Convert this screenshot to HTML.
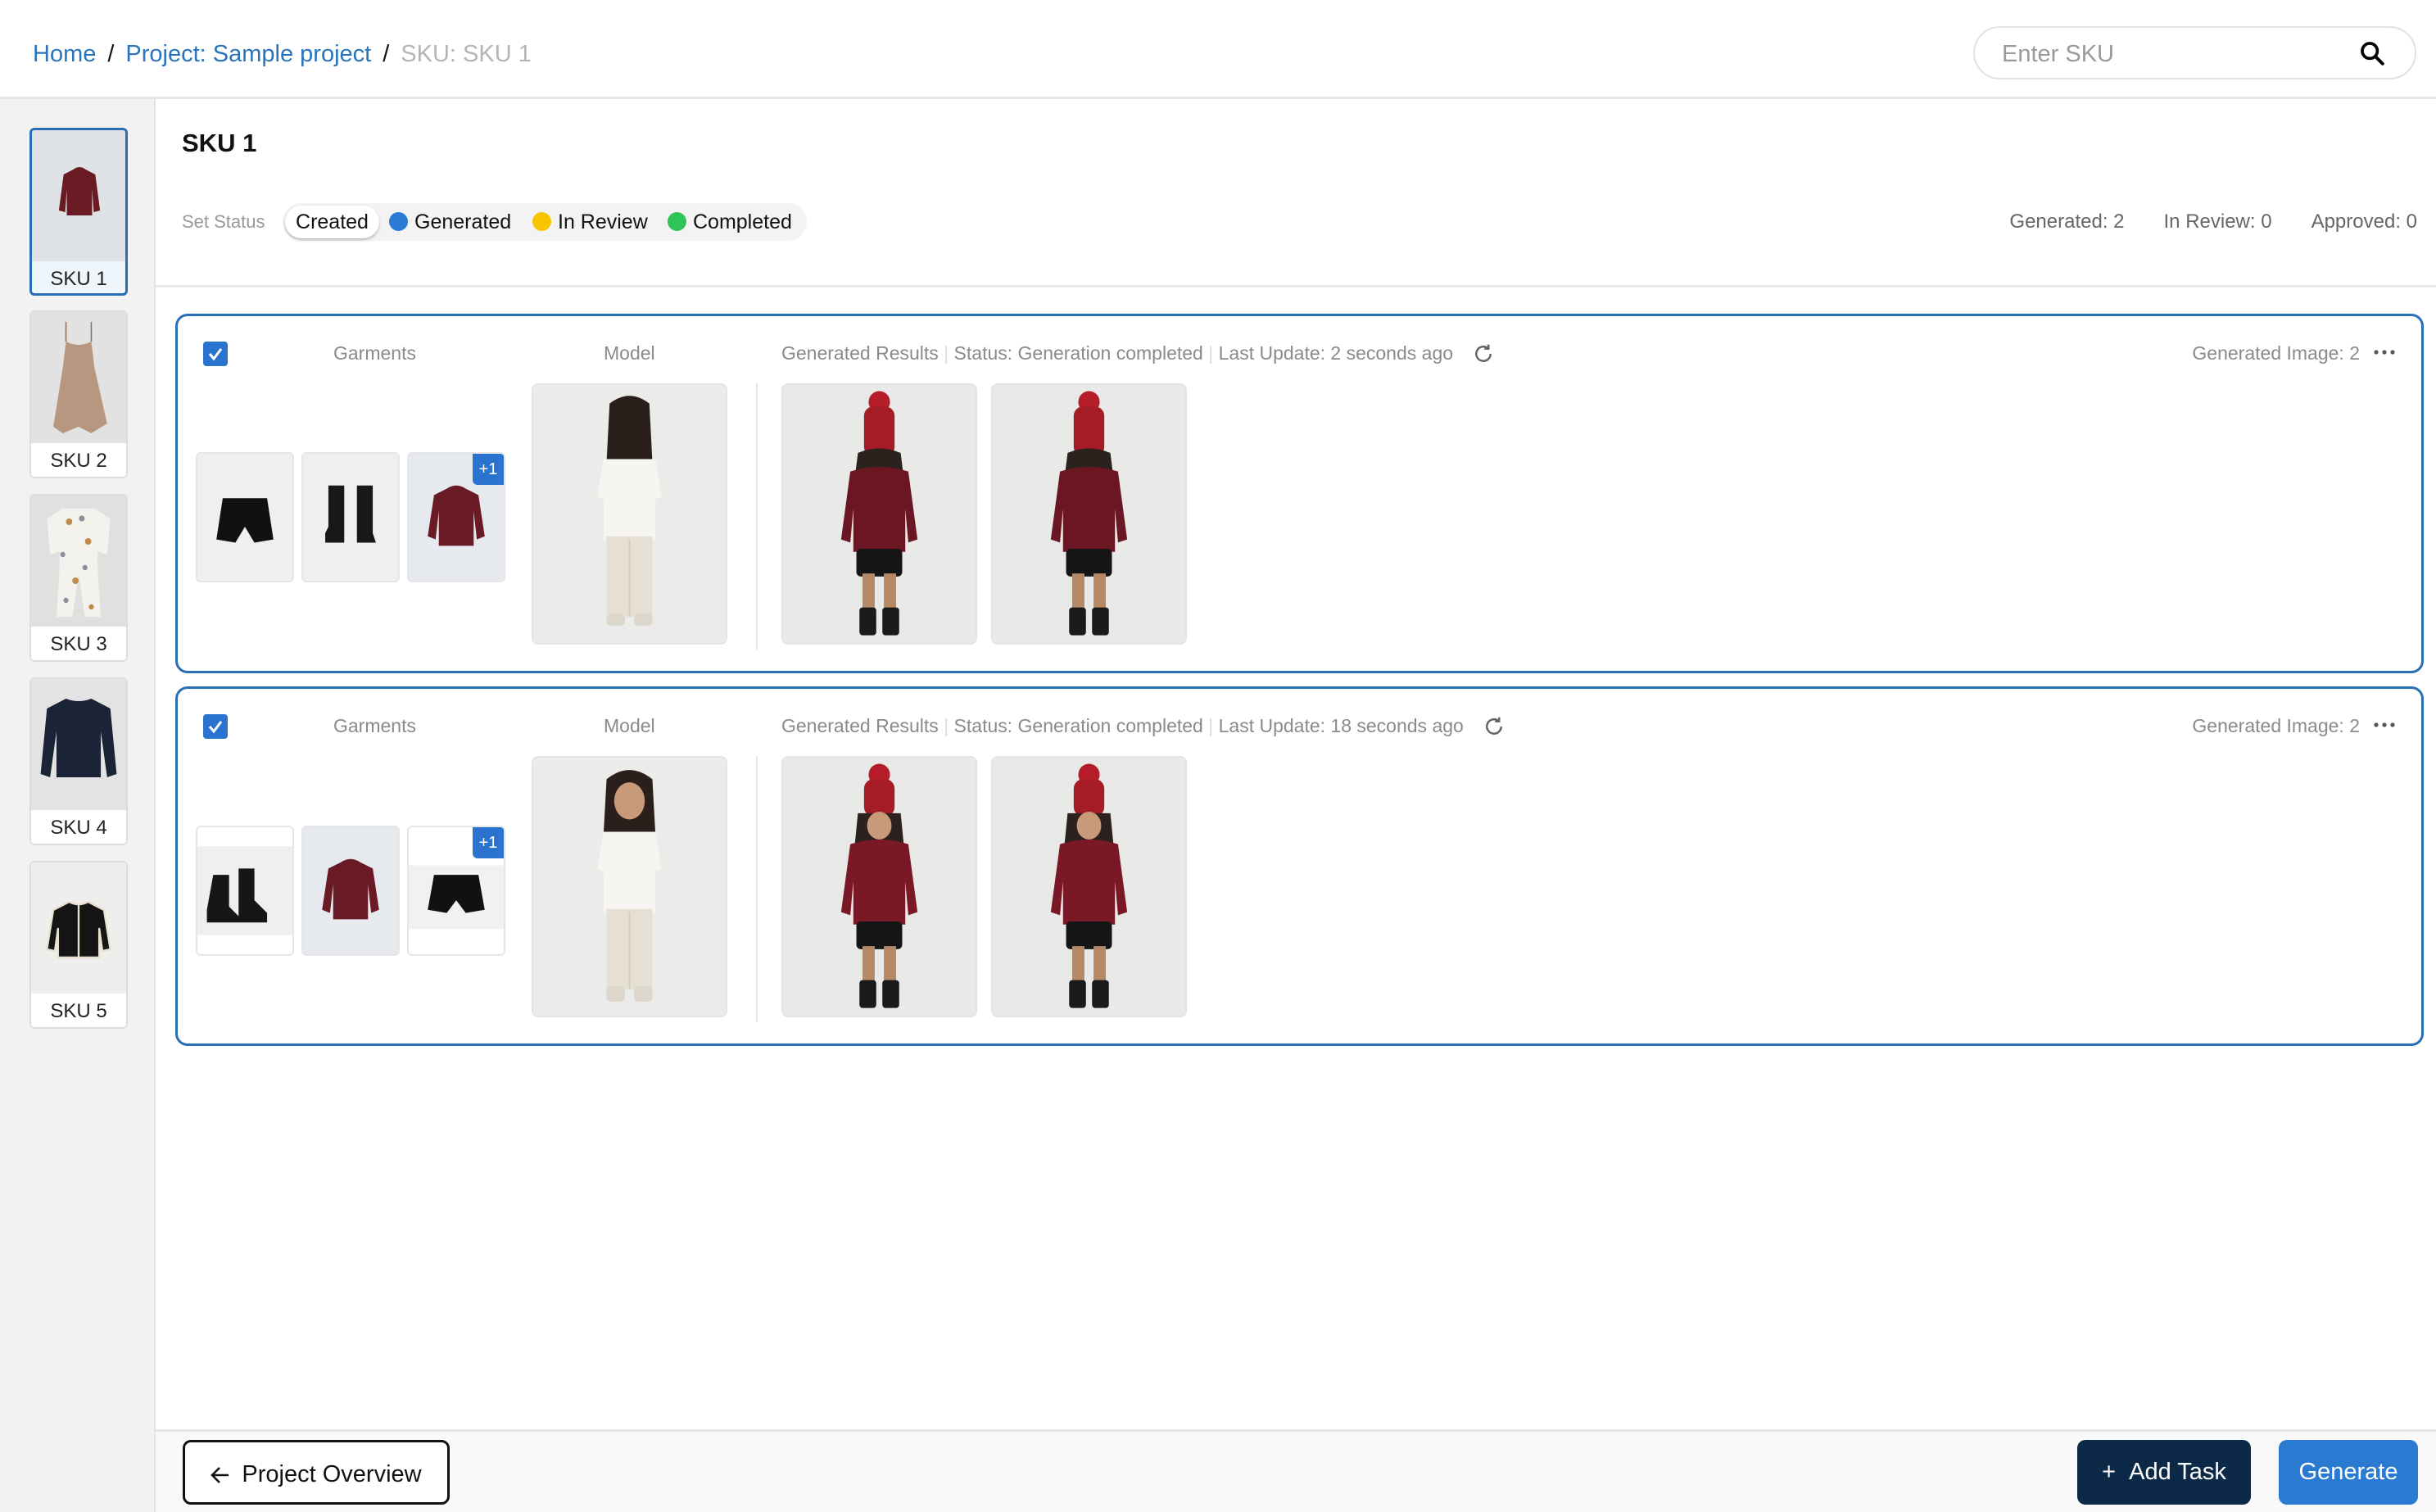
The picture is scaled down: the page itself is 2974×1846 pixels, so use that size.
<!DOCTYPE html>
<html><head><meta charset="utf-8"><style>
*{box-sizing:border-box;margin:0;padding:0}
body{width:2974px;height:1846px;background:#fff;font-family:"Liberation Sans",sans-serif;position:relative;overflow:hidden;color:#111}
.a{position:absolute}
.hdr{left:0;top:0;width:2974px;height:121px;border-bottom:3px solid #e6e6e6;background:#fff}
.bc{left:40px;top:50px;font-size:29px;white-space:nowrap}
.bc .l{color:#2a74bd}.bc .s{color:#111;margin:0 14px}.bc .g{color:#b5b5b5}
.search{left:2409px;top:32px;width:541px;height:65px;border:2px solid #e2e2e2;border-radius:33px}
.search span{position:absolute;left:33px;top:16px;font-size:29px;color:#9a9a9a}
.side{left:0;top:121px;width:190px;height:1725px;background:#f2f2f2;border-right:2px solid #e4e4e4}
.sk{left:36px;width:120px;height:205px;border:2px solid #ddd;border-radius:6px;background:#fff;overflow:hidden}
.sk svg{display:block;width:116px;height:160px}
.sk div{text-align:center;font-size:24px;color:#222;margin-top:8px}
.sk.on{border:3px solid #2a6fb5;background:#eef5fb}
.title{left:222px;top:157px;font-size:31px;font-weight:bold}
.ss{left:222px;top:258px;font-size:22px;color:#999}
.pill{left:345px;top:248px;width:640px;height:46px;background:#f3f3f3;border-radius:23px}
.pill .c{position:absolute;left:3px;top:3px;width:115px;height:40px;background:#fff;border-radius:20px;box-shadow:0 2px 3px rgba(0,0,0,.25);font-size:25px;text-align:center;line-height:40px}
.pill .it{position:absolute;top:9px;font-size:25px;line-height:28px}
.dot{display:inline-block;width:23px;height:23px;border-radius:50%;vertical-align:-3px;margin-right:8px}
.cnt{right:23px;top:257px;font-size:24px;color:#666;white-space:nowrap}
.cnt span{margin-left:48px}
.div{left:190px;top:348px;width:2784px;height:3px;background:#e8e8e8}
.card{left:214px;width:2745px;height:439px;border:3px solid #2a6fb5;border-radius:15px;background:#fff}
.cb{left:31px;top:31px;width:30px;height:30px;background:#2a74d0;border-radius:4px}
.lab{font-size:23px;color:#8a8a8a;white-space:nowrap;top:32px}
.th{width:120px;height:159px;border:2px solid #e6e6e6;border-radius:6px;overflow:hidden;background:#eee}
.th svg,.big svg{display:block;width:100%;height:100%}
.big{width:239px;height:319px;border:2px solid #e4e4e4;border-radius:8px;overflow:hidden}
.plus{right:0;top:0;width:38px;height:38px;background:#2a74d0;color:#fff;font-size:20px;text-align:center;line-height:38px;border-radius:0 0 0 6px}
.vl{width:2px;background:#e6e6e6}
.bot{left:190px;top:1745px;width:2784px;height:101px;background:#f9f9f9;border-top:3px solid #e6e6e6}
.btn{height:79px;border-radius:10px;font-size:29px;line-height:79px;text-align:center}
.dots{top:40px;width:30px;height:8px}
</style></head><body>
<div class="a hdr"></div>
<div class="a bc"><span class="l">Home</span><span class="s">/</span><span class="l">Project: Sample project</span><span class="s">/</span><span class="g">SKU: SKU 1</span></div>
<div class="a search"><span>Enter SKU</span>
<svg class="a" style="left:468px;top:14px" width="34" height="34" viewBox="0 0 24 24"><circle cx="10" cy="10" r="6.5" fill="none" stroke="#000" stroke-width="2.6"/><path d="M15 15l6 6" stroke="#000" stroke-width="2.8" stroke-linecap="round"/></svg></div>

<div class="a side"></div>
<div class="a sk on" style="top:156px"><svg viewBox="0 0 60 80" preserveAspectRatio="none"><rect width="60" height="80" fill="#dfe3e6"/><path d="M26 24q4-3 8 0l6 3 3 22-4 1-1-14v16H22V36l-1 14-4-1 3-22z" fill="#6a1a22"/></svg><div>SKU 1</div></div>
<div class="a sk" style="top:379px"><svg viewBox="0 0 60 80" preserveAspectRatio="none"><rect width="60" height="80" fill="#e2e2e2"/><path d="M22 6v12M38 6v12" stroke="#8a7060" stroke-width=".8"/><path d="M22 18q8 4 16 0l2 16 8 34-10 6-8-4-10 4-6-4 6-36z" fill="#b89781"/></svg><div>SKU 2</div></div>
<div class="a sk" style="top:603px"><svg viewBox="0 0 60 80" preserveAspectRatio="none"><rect width="60" height="80" fill="#e0e0e0"/><path d="M20 8h20l10 6-2 22-6-2v10l2 30h-10l-4-26-4 26H16l2-30V34l-6 2-2-22z" fill="#f4f2ec"/><g fill="#c08a4a"><circle cx="24" cy="16" r="2"/><circle cx="36" cy="28" r="2"/><circle cx="28" cy="52" r="2"/><circle cx="38" cy="68" r="1.6"/></g><g fill="#8a9098"><circle cx="32" cy="14" r="1.8"/><circle cx="20" cy="36" r="1.6"/><circle cx="34" cy="44" r="1.6"/><circle cx="22" cy="64" r="1.6"/></g></svg><div>SKU 3</div></div>
<div class="a sk" style="top:827px"><svg viewBox="0 0 60 80" preserveAspectRatio="none"><rect width="60" height="80" fill="#e3e3e3"/><path d="M22 12q8 3 16 0l12 6 4 40-6 2-4-28v28H16V32l-4 28-6-2 4-40z" fill="#1b2337"/></svg><div>SKU 4</div></div>
<div class="a sk" style="top:1051px"><svg viewBox="0 0 60 80" preserveAspectRatio="none"><rect width="60" height="80" fill="#eeeeec"/><path d="M24 24q6 3 12 0l10 5 4 24-5 1-2-14v18H17V40l-2 14-5-1 4-24z" fill="#151515" stroke="#e8e0cc" stroke-width="1.2"/><path d="M30 26v32" stroke="#e8e0cc" stroke-width="1.2"/></svg><div>SKU 5</div></div>

<div class="a title">SKU 1</div>
<div class="a ss">Set Status</div>
<div class="a pill"><div class="c">Created</div>
<div class="it" style="left:130px"><span class="dot" style="background:#2a7ad6"></span>Generated</div>
<div class="it" style="left:305px"><span class="dot" style="background:#f7c400"></span>In Review</div>
<div class="it" style="left:470px"><span class="dot" style="background:#2fc45a"></span>Completed</div></div>
<div class="a cnt">Generated: 2<span>In Review: 0</span><span>Approved: 0</span></div>
<div class="a div"></div>

<!-- CARD 1 -->
<div class="a card" style="top:383px">
<div class="a cb"><svg width="30" height="30" viewBox="0 0 30 30"><path d="M8 15l5 6 9-12" fill="none" stroke="#fff" stroke-width="3"/></svg></div>
<div class="a lab" style="left:190px">Garments</div>
<div class="a lab" style="left:520px">Model</div>
<div class="a lab" style="left:737px">Generated Results <span style="color:#ddd">|</span> Status: Generation completed <span style="color:#ddd">|</span> Last Update: 2 seconds ago</div>
<svg class="a" style="left:1579px;top:31px" width="30" height="30" viewBox="0 0 24 24"><path d="M19 12a7 7 0 1 1-2.5-5.4" fill="none" stroke="#666" stroke-width="2"/><path d="M17 3v4h-4" fill="none" stroke="#666" stroke-width="2"/></svg>
<div class="a lab" style="right:75px">Generated Image: 2</div>
<svg class="a dots" style="right:30px" viewBox="0 0 30 8"><circle cx="5" cy="4" r="2.6" fill="#555"/><circle cx="15" cy="4" r="2.6" fill="#555"/><circle cx="25" cy="4" r="2.6" fill="#555"/></svg>
<div class="a th" style="left:22px;top:166px"><svg viewBox="0 0 60 80" preserveAspectRatio="none"><rect width="60" height="80" fill="#efefef"/><path d="M16 28h28l4 26-12 2-6-10-6 10-12-2z" fill="#111"/></svg></div>
<div class="a th" style="left:151px;top:166px"><svg viewBox="0 0 60 80" preserveAspectRatio="none"><rect width="60" height="80" fill="#efefef"/><path d="M16 20h10v36h-12v-6l2-4z M34 20h10v30l2 6H34z" fill="#181818"/></svg></div>
<div class="a th" style="left:280px;top:166px"><svg viewBox="0 0 60 80" preserveAspectRatio="none"><rect width="60" height="80" fill="#e6eaee"/><path d="M24 22q6-4 12 0l8 4 4 26-5 2-2-18v22H19V36l-2 18-5-2 4-26z" fill="#6a1a24"/></svg><div class="a plus">+1</div></div>
<div class="a big" style="left:432px;top:82px"><svg viewBox="0 0 126 167" preserveAspectRatio="none"><rect width="126" height="167" fill="#ebebe9"/><path d="M50 12q13-10 26 0l2 38H48z" fill="#2a1f1a"/><path d="M46 48h34l4 24-4 2v26H46V74l-4-2z" fill="#f6f5f1"/><rect x="48" y="98" width="30" height="52" fill="#e6e0d4"/><path d="M63 100v50" stroke="#d4cec2"/><rect x="48" y="148" width="12" height="8" rx="3" fill="#dcd6cc"/><rect x="66" y="148" width="12" height="8" rx="3" fill="#dcd6cc"/></svg></div>
<div class="a vl" style="left:706px;top:82px;height:325px"></div>
<div class="a big" style="left:737px;top:82px"><svg viewBox="0 0 126 167" preserveAspectRatio="none"><rect width="126" height="167" fill="#e9e9e7"/><circle cx="63" cy="11" r="7" fill="#b51d2a"/><rect x="53" y="14" width="20" height="32" rx="6" fill="#a51b26"/><path d="M49 44q14-6 28 0l2 16H47z" fill="#2b211d"/><path d="M44 56q19-6 38 0l6 44-6 2-2-22v28H46V80l-2 22-6-2z" fill="#6b1723"/><rect x="48" y="106" width="30" height="18" rx="3" fill="#151515"/><rect x="52" y="122" width="8" height="25" fill="#b58866"/><rect x="66" y="122" width="8" height="25" fill="#b58866"/><rect x="50" y="144" width="11" height="18" rx="2" fill="#1a1a1a"/><rect x="65" y="144" width="11" height="18" rx="2" fill="#1a1a1a"/></svg></div>
<div class="a big" style="left:993px;top:82px"><svg viewBox="0 0 126 167" preserveAspectRatio="none"><rect width="126" height="167" fill="#e9e9e7"/><circle cx="63" cy="11" r="7" fill="#b51d2a"/><rect x="53" y="14" width="20" height="32" rx="6" fill="#a51b26"/><path d="M49 44q14-6 28 0l2 16H47z" fill="#2b211d"/><path d="M44 56q19-6 38 0l6 44-6 2-2-22v28H46V80l-2 22-6-2z" fill="#6b1723"/><rect x="48" y="106" width="30" height="18" rx="3" fill="#151515"/><rect x="52" y="122" width="8" height="25" fill="#b58866"/><rect x="66" y="122" width="8" height="25" fill="#b58866"/><rect x="50" y="144" width="11" height="18" rx="2" fill="#1a1a1a"/><rect x="65" y="144" width="11" height="18" rx="2" fill="#1a1a1a"/></svg></div>
</div>

<!-- CARD 2 -->
<div class="a card" style="top:838px">
<div class="a cb"><svg width="30" height="30" viewBox="0 0 30 30"><path d="M8 15l5 6 9-12" fill="none" stroke="#fff" stroke-width="3"/></svg></div>
<div class="a lab" style="left:190px">Garments</div>
<div class="a lab" style="left:520px">Model</div>
<div class="a lab" style="left:737px">Generated Results <span style="color:#ddd">|</span> Status: Generation completed <span style="color:#ddd">|</span> Last Update: 18 seconds ago</div>
<svg class="a" style="left:1592px;top:31px" width="30" height="30" viewBox="0 0 24 24"><path d="M19 12a7 7 0 1 1-2.5-5.4" fill="none" stroke="#666" stroke-width="2"/><path d="M17 3v4h-4" fill="none" stroke="#666" stroke-width="2"/></svg>
<div class="a lab" style="right:75px">Generated Image: 2</div>
<svg class="a dots" style="right:30px" viewBox="0 0 30 8"><circle cx="5" cy="4" r="2.6" fill="#555"/><circle cx="15" cy="4" r="2.6" fill="#555"/><circle cx="25" cy="4" r="2.6" fill="#555"/></svg>
<div class="a th" style="left:22px;top:167px;background:#fff"><svg viewBox="0 0 60 80" preserveAspectRatio="none"><rect width="60" height="80" fill="#fff"/><rect y="12" width="60" height="56" fill="#efefef"/><path d="M10 30h10v20l6 6v4H6v-8z M26 26h10v20l8 8v6H26z" fill="#161616"/></svg></div>
<div class="a th" style="left:151px;top:167px"><svg viewBox="0 0 60 80" preserveAspectRatio="none"><rect width="60" height="80" fill="#e6eaee"/><path d="M24 22q6-4 12 0l8 4 4 26-5 2-2-18v22H19V36l-2 18-5-2 4-26z" fill="#6a1a24"/></svg></div>
<div class="a th" style="left:280px;top:167px;background:#fff"><svg viewBox="0 0 60 80" preserveAspectRatio="none"><rect width="60" height="80" fill="#fff"/><rect y="24" width="60" height="40" fill="#f1f1f1"/><path d="M16 30h28l4 22-12 2-6-8-6 8-12-2z" fill="#111"/></svg><div class="a plus">+1</div></div>
<div class="a big" style="left:432px;top:82px"><svg viewBox="0 0 126 167" preserveAspectRatio="none"><rect width="126" height="167" fill="#ebebe9"/><path d="M48 14q15-12 30 0l2 36H46z" fill="#2a1f1a"/><ellipse cx="63" cy="28" rx="10" ry="12" fill="#c99a7a"/><path d="M46 48h34l4 24-4 2v26H46V74l-4-2z" fill="#f6f5f1"/><rect x="48" y="98" width="30" height="52" fill="#e6e0d4"/><path d="M63 100v50" stroke="#d4cec2"/><rect x="48" y="148" width="12" height="10" rx="3" fill="#dcd6cc"/><rect x="66" y="148" width="12" height="10" rx="3" fill="#dcd6cc"/></svg></div>
<div class="a vl" style="left:706px;top:82px;height:325px"></div>
<div class="a big" style="left:737px;top:82px"><svg viewBox="0 0 126 167" preserveAspectRatio="none"><rect width="126" height="167" fill="#e9e9e7"/><circle cx="63" cy="11" r="7" fill="#b51d2a"/><rect x="53" y="14" width="20" height="24" rx="6" fill="#a51b26"/><path d="M49 36h28l2 20H47z" fill="#2b211d"/><ellipse cx="63" cy="44" rx="8" ry="9" fill="#c99a7a"/><path d="M44 56q19-6 38 0l6 44-6 2-2-22v28H46V80l-2 22-6-2z" fill="#7a1826"/><rect x="48" y="106" width="30" height="18" rx="3" fill="#151515"/><rect x="52" y="122" width="8" height="25" fill="#b58866"/><rect x="66" y="122" width="8" height="25" fill="#b58866"/><rect x="50" y="144" width="11" height="18" rx="2" fill="#1a1a1a"/><rect x="65" y="144" width="11" height="18" rx="2" fill="#1a1a1a"/></svg></div>
<div class="a big" style="left:993px;top:82px"><svg viewBox="0 0 126 167" preserveAspectRatio="none"><rect width="126" height="167" fill="#e9e9e7"/><circle cx="63" cy="11" r="7" fill="#b51d2a"/><rect x="53" y="14" width="20" height="24" rx="6" fill="#a51b26"/><path d="M49 36h28l2 20H47z" fill="#2b211d"/><ellipse cx="63" cy="44" rx="8" ry="9" fill="#c99a7a"/><path d="M44 56q19-6 38 0l6 44-6 2-2-22v28H46V80l-2 22-6-2z" fill="#7a1826"/><rect x="48" y="106" width="30" height="18" rx="3" fill="#151515"/><rect x="52" y="122" width="8" height="25" fill="#b58866"/><rect x="66" y="122" width="8" height="25" fill="#b58866"/><rect x="50" y="144" width="11" height="18" rx="2" fill="#1a1a1a"/><rect x="65" y="144" width="11" height="18" rx="2" fill="#1a1a1a"/></svg></div>
</div>

<div class="a bot"></div>
<div class="a btn" style="left:223px;top:1758px;width:326px;border:3px solid #111;background:#fff;color:#111"><svg style="vertical-align:-3px;margin-right:14px" width="24" height="22" viewBox="0 0 24 22"><path d="M22 11H3M11 2L2 11l9 9" fill="none" stroke="#111" stroke-width="2.6"/></svg>Project Overview</div>
<div class="a btn" style="left:2536px;top:1758px;width:212px;background:#0c2a48;color:#fff">+ &nbsp;Add Task</div>
<div class="a btn" style="left:2782px;top:1758px;width:170px;background:#2a7ad2;color:#fff">Generate</div>
</body></html>
